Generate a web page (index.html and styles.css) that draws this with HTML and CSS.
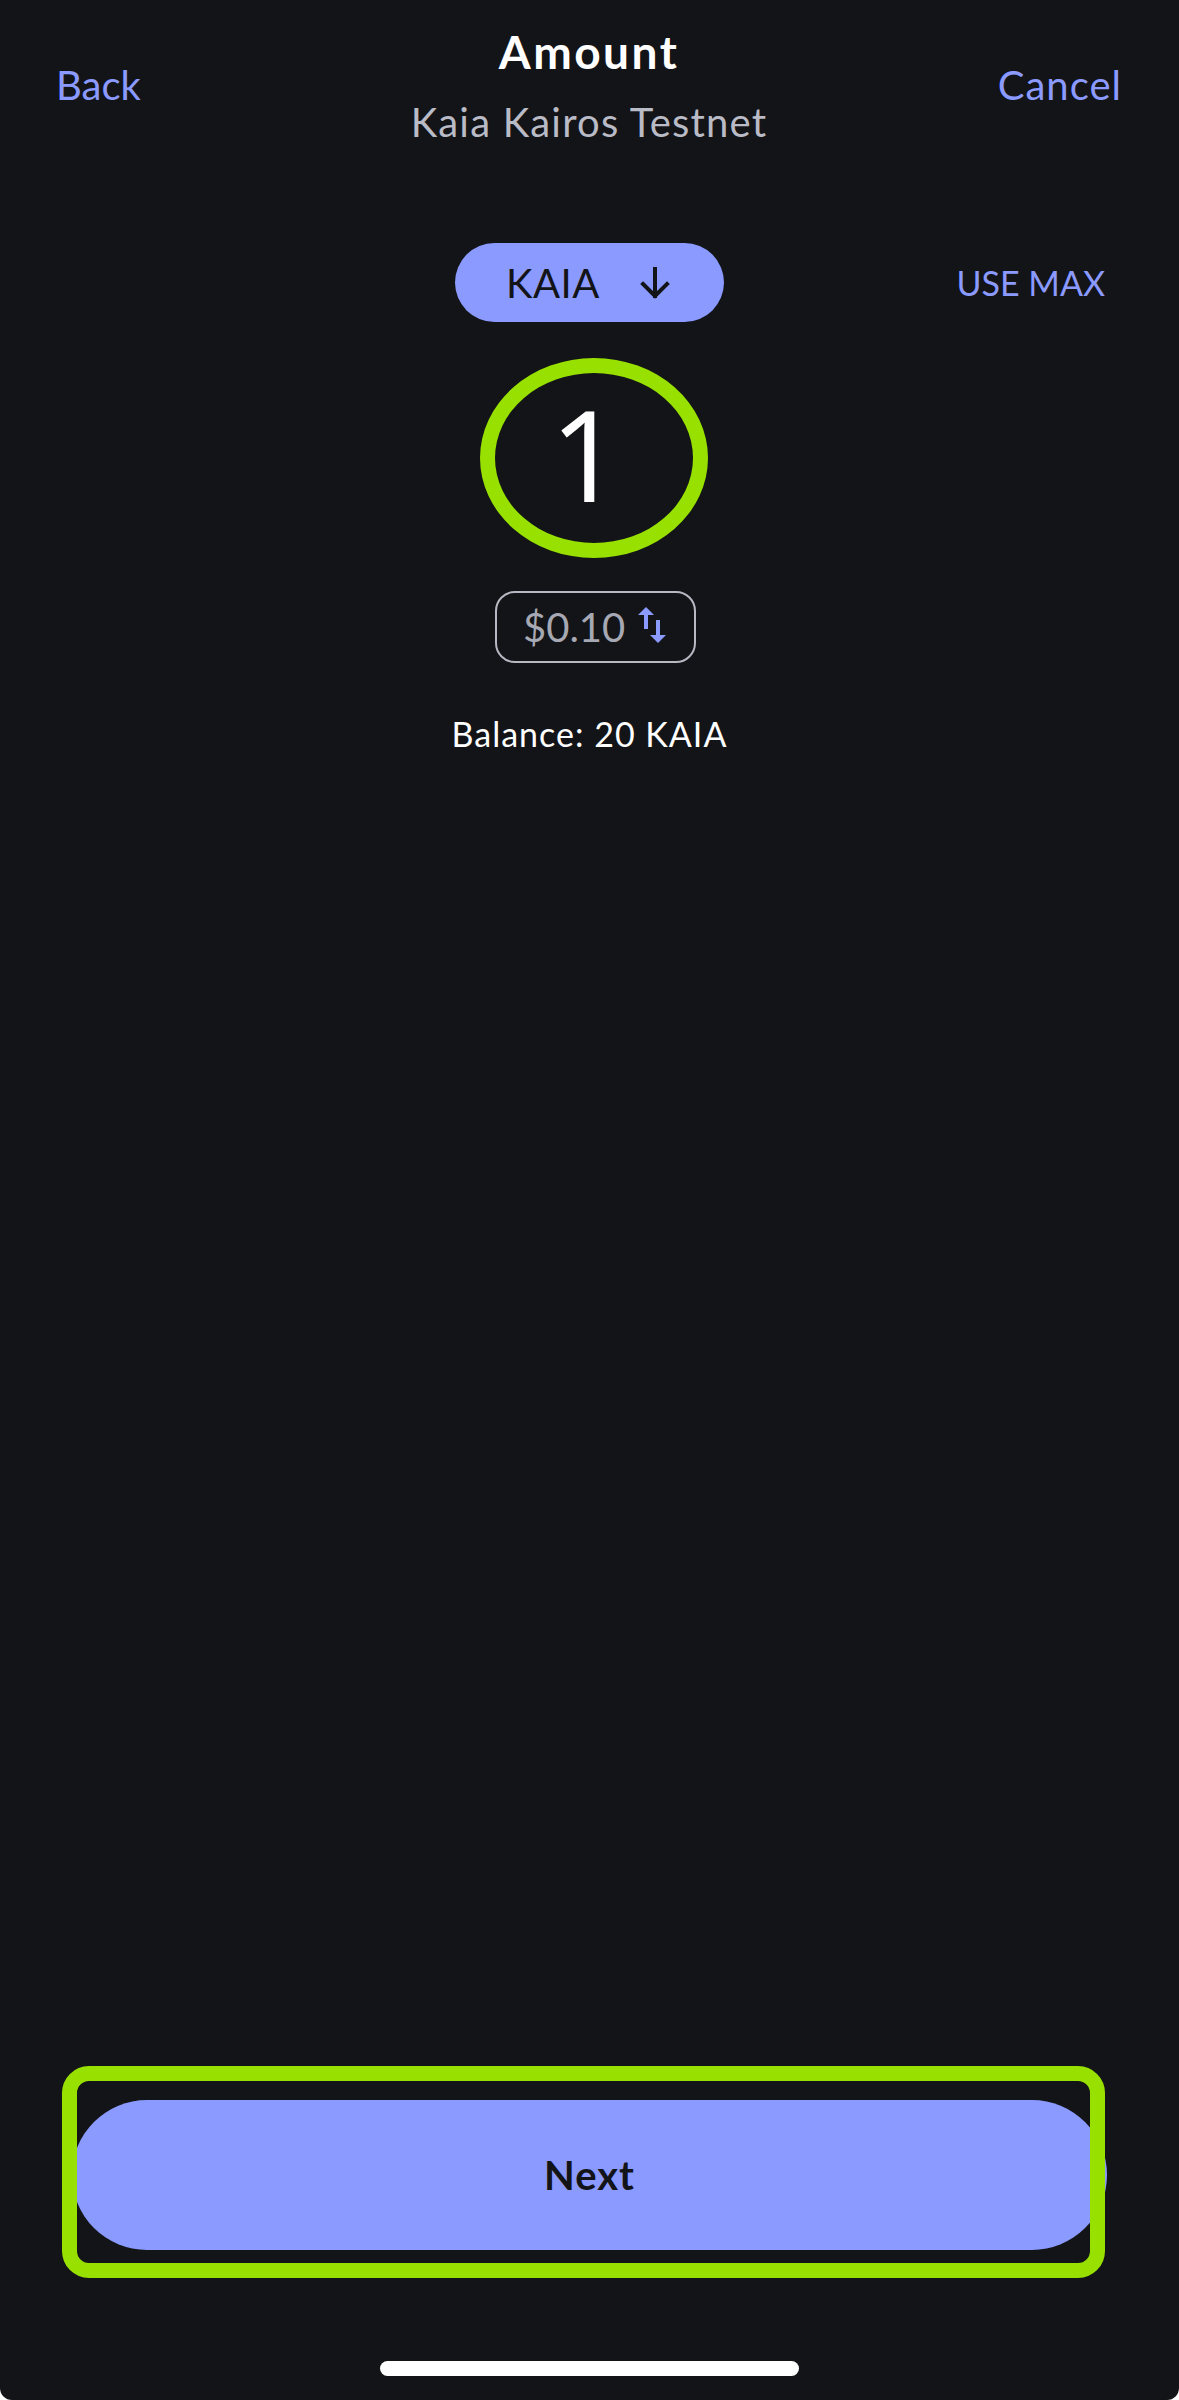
FILE: index.html
```html
<!DOCTYPE html>
<html lang="en">
<head>
<meta charset="utf-8">
<title>Amount</title>
<link rel="stylesheet" href="styles.css">
</head>
<body>
<div class="screen">
  <header class="header">
    <a class="nav-link nav-left">Back</a>
    <div class="title-block">
      <div class="title">Amount</div>
      <div class="subtitle">Kaia Kairos Testnet</div>
    </div>
    <a class="nav-link nav-right">Cancel</a>
  </header>

  <div class="token-row">
    <div></div>
    <button class="token-pill">
      <span class="token-name">KAIA</span>
      <svg class="token-arrow" width="30" height="32" viewBox="0 0 30 32" fill="none" stroke="#131417" stroke-width="4" stroke-linecap="square">
        <path d="M15 2 V29"/>
        <path d="M3 17 L15 29 L27 17"/>
      </svg>
    </button>
    <a class="use-max">USE MAX</a>
  </div>

  <div class="amount-row">
    <div class="amount-wrap">
      <span class="amount">1</span>
      <span class="highlight-ellipse"></span>
    </div>
  </div>

  <div class="fiat-row">
    <div class="fiat-box">
      <span class="fiat-value">$0.10</span>
      <svg class="swap-icon" width="28" height="36" viewBox="0 0 28 36">
        <path fill="#8b9aff" d="M8 0 L16 8 L10 8 L10 22 L6 22 L6 8 L0 8 Z"/>
        <path fill="#8b9aff" d="M18 13 L22 13 L22 28 L28 28 L20 36 L12 28 L18 28 Z"/>
      </svg>
    </div>
  </div>

  <div class="balance">Balance: 20 KAIA</div>

  <div class="spacer"></div>

  <div class="footer">
    <div class="next-wrap">
      <button class="next-btn">Next</button>
      <span class="highlight-rect"></span>
    </div>
    <div class="home-indicator"></div>
  </div>
</div>
</body>
</html>
```
FILE: styles.css
```css
* { box-sizing: border-box; }
html, body { margin: 0; padding: 0; }
body {
  background: #ffffff;
  font-family: "Lato", "Open Sans", sans-serif;
}
.screen {
  width: 1179px;
  height: 2400px;
  background: #131417;
  border-radius: 0 0 12px 12px;
  display: flex;
  flex-direction: column;
  overflow: hidden;
}

/* Header */
.header {
  display: grid;
  grid-template-columns: 1fr auto 1fr;
  padding: 24px 57px 0 56px;
}
.nav-link {
  font-size: 40px;
  line-height: 48px;
  color: #8b9aff;
  margin-top: 37px;
}
.nav-left { justify-self: start; }
.nav-right { justify-self: end; letter-spacing: 1px; }
.title-block {
  display: flex;
  flex-direction: column;
  align-items: center;
}
.title {
  font-size: 46px;
  line-height: 56px;
  font-weight: 700;
  color: #ffffff;
  letter-spacing: 2.5px;
}
.subtitle {
  margin-top: 18px;
  font-size: 40px;
  line-height: 48px;
  color: #b9bbc6;
  letter-spacing: 1.2px;
}

/* Token row */
.token-row {
  margin-top: 97px;
  display: grid;
  grid-template-columns: 1fr auto 1fr;
  align-items: center;
  padding: 0 74px;
}
.token-pill {
  width: 269px;
  height: 79px;
  border: none;
  border-radius: 40px;
  background: #8b9aff;
  display: flex;
  align-items: center;
  padding: 0 0 0 51px;
  gap: 40px;
  font-family: inherit;
}
.token-name {
  font-size: 40px;
  color: #131417;
  letter-spacing: 0.5px;
}
.token-arrow { display: block; }
.use-max {
  justify-self: end;
  font-size: 34px;
  color: #8b9aff;
}

/* Amount */
.amount-row {
  margin-top: 36px;
  display: flex;
  justify-content: center;
  padding-left: 9px;
}
.amount-wrap {
  position: relative;
  width: 228px;
  height: 200px;
  display: flex;
  justify-content: center;
}
.amount {
  font-family: "Open Sans", "Lato", sans-serif;
  font-size: 126px;
  line-height: 191px;
  color: #ffffff;
  margin-left: -16px;
}
.highlight-ellipse {
  position: absolute;
  inset: 0;
  border: 15px solid #98e000;
  border-radius: 50%;
}

/* Fiat */
.fiat-row {
  margin-top: 33px;
  display: flex;
  justify-content: center;
  padding-left: 12px;
}
.fiat-box {
  width: 201px;
  height: 72px;
  border: 2.5px solid #b6b8c2;
  border-radius: 20px;
  display: flex;
  align-items: center;
  padding-left: 26px;
  gap: 13px;
}
.fiat-value {
  font-size: 40px;
  color: #a6a8b3;
}
.swap-icon { display: block; margin-top: -4px; }

.balance {
  margin-top: 51px;
  text-align: center;
  font-size: 34px;
  line-height: 40px;
  color: #ffffff;
  letter-spacing: 1px;
}

.spacer { flex: 1; }

/* Footer */
.footer {
  display: flex;
  flex-direction: column;
  align-items: center;
  padding-bottom: 24px;
}
.next-wrap {
  position: relative;
  width: 100%;
  padding: 0 72px;
}
.next-btn {
  display: block;
  width: 100%;
  height: 150px;
  border: none;
  border-radius: 75px;
  background: #8b9aff;
  color: #131417;
  font-family: inherit;
  font-size: 40px;
  font-weight: 700;
  letter-spacing: 1px;
}
.highlight-rect {
  position: absolute;
  left: 62px;
  top: -34px;
  width: 1043px;
  height: 212px;
  border: 15px solid #98e000;
  border-radius: 27px;
}
.home-indicator {
  margin-top: 111px;
  width: 419px;
  height: 15px;
  border-radius: 8px;
  background: #ffffff;
}
```
